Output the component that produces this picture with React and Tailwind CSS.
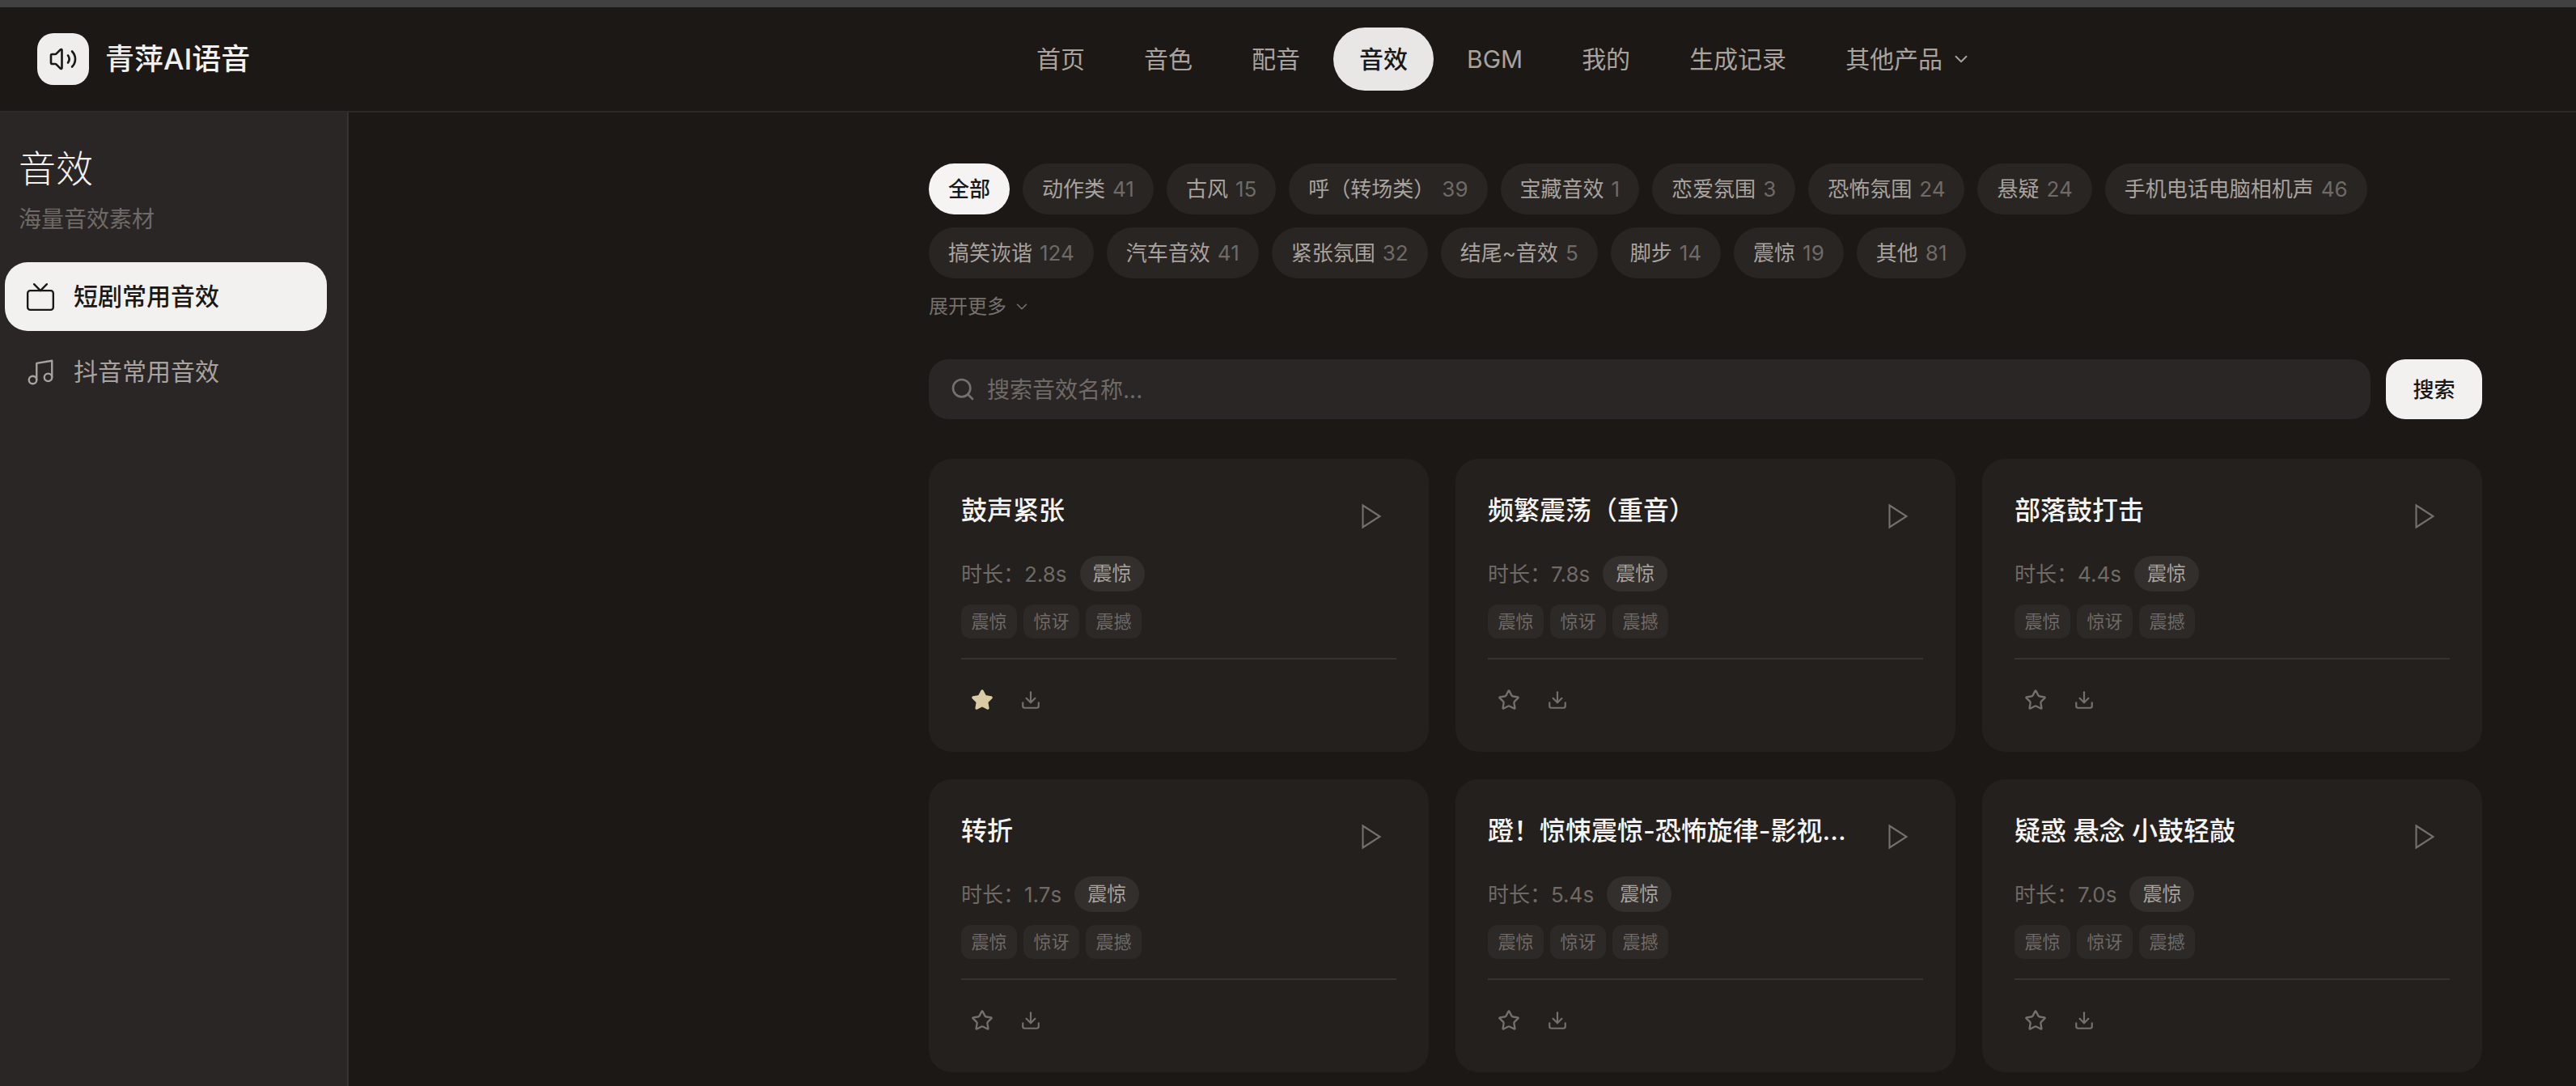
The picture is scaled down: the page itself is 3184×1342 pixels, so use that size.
import { ChevronDown, Download, Music, Search, Star, Tv, Volume2 } from 'lucide-react';

const navItems = ['首页', '音色', '配音', '音效', 'BGM', '我的', '生成记录'];

const filters = [
  ['全部', ''],
  ['动作类', 41],
  ['古风', 15],
  ['呼（转场类）', 39],
  ['宝藏音效', 1],
  ['恋爱氛围', 3],
  ['恐怖氛围', 24],
  ['悬疑', 24],
  ['手机电话电脑相机声', 46],
  ['搞笑诙谐', 124],
  ['汽车音效', 41],
  ['紧张氛围', 32],
  ['结尾~音效', 5],
  ['脚步', 14],
  ['震惊', 19],
  ['其他', 81],
];

const sounds = [
  { title: '鼓声紧张', duration: '2.8s', starred: true },
  { title: '频繁震荡（重音）', duration: '7.8s' },
  { title: '部落鼓打击', duration: '4.4s' },
  { title: '转折', duration: '1.7s' },
  { title: '蹬！惊悚震惊-恐怖旋律-影视...', duration: '5.4s' },
  { title: '疑惑 悬念 小鼓轻敲', duration: '7.0s' },
];

function SoundCard({ title, duration, starred }) {
  return (
    <div className="h-[362px] rounded-[28px] bg-[#24201d] p-10">
      <div className="flex items-start justify-between">
        <h3 className="mt-px h-[46px] text-[32px] leading-[46px] font-medium whitespace-nowrap text-[#f5f4f2]">{title}</h3>
        {/* sharp triangle, lucide's Play has rounded corners */}
        <svg
          width="36"
          height="36"
          viewBox="0 0 24 24"
          fill="none"
          stroke="currentColor"
          strokeWidth="1.4"
          className="mt-[13px] mr-[13px] shrink-0 text-[#75706b]"
        >
          <polygon points="5 3 19 12 5 21" />
        </svg>
      </div>
      <div className="mt-[31px] flex h-[44px] items-center gap-4">
        <span className="text-[26px] text-[#6f6a66]">时长：{duration}</span>
        <span className="rounded-full bg-[#332f2c] px-4 text-[24px] leading-[44px] text-[#a8a39e]">震惊</span>
      </div>
      <div className="mt-4 flex gap-2">
        {['震惊', '惊讶', '震撼'].map((tag) => (
          <span key={tag} className="h-[42px] w-[69px] rounded-xl bg-[#2d2926] text-center text-[22px] leading-[42px] text-[#6f6a66]">
            {tag}
          </span>
        ))}
      </div>
      <div className="mt-6 border-t-2 border-[#38332f]" />
      <div className="mt-[36px] ml-[12px] flex items-center gap-[33px]">
        <Star
          size={28}
          strokeWidth={2}
          className={starred ? 'fill-[#d9cba3] text-[#d9cba3]' : 'text-[#75706b]'}
        />
        <Download size={26} strokeWidth={2} className="text-[#75706b]" />
      </div>
    </div>
  );
}

export default function App() {
  return (
    <div className="h-[1342px] w-[3184px] overflow-hidden bg-[#1b1816] font-['Inter','Noto_Sans_CJK_SC',sans-serif]">
      <div className="h-[9px] bg-[#414141]" />

      <header className="flex h-[130px] items-center border-b-2 border-[#2c2927] bg-[#1b1816] pl-[46px]">
        <div className="flex w-[261px] shrink-0 items-center gap-[20px]">
          <div className="flex h-[64px] w-[64px] shrink-0 items-center justify-center rounded-[20px] bg-[#efeeec]">
            <Volume2 size={36} strokeWidth={1.75} className="text-[#1a1817]" />
          </div>
          <span className="text-[36px] font-medium whitespace-nowrap text-[#f2f1ef]">青萍AI语音</span>
        </div>
        <nav className="ml-[942px] flex items-center gap-[9px]">
          {navItems.map((item) => (
            <a
              key={item}
              className={`rounded-full px-8 text-[30px] leading-[78px] ${
                item === '音效' ? 'bg-[#e8e7e5] font-medium text-[#1a1817]' : 'text-[#a8a39e]'
              }`}
            >
              {item}
            </a>
          ))}
          <a className="flex items-center gap-[10px] px-8 text-[30px] leading-[78px] text-[#a8a39e]">
            其他产品
            <ChevronDown size={26} strokeWidth={1.75} />
          </a>
        </nav>
      </header>

      <div className="flex h-[1203px]">
        <aside className="w-[431px] shrink-0 border-r-2 border-[#35312f] bg-[#2a2625] pt-[39px]">
          <h2 className="pl-[23px] text-[46px] leading-[60px] font-light text-[#f2f1ef]">音效</h2>
          <p className="mt-[13px] pl-[23px] text-[28px] leading-[40px] text-[#6f6a66]">海量音效素材</p>
          <div className="mt-[33px] ml-[6px] flex w-[398px] flex-col gap-2">
            <div className="flex h-[85px] items-center gap-[22px] rounded-[28px] bg-[#f2f1ef] pl-[28px] text-[30px] font-medium text-[#1a1817]">
              <Tv size={38} strokeWidth={1.5} className="-ml-[3px]" />
              短剧常用音效
            </div>
            <div className="flex h-[85px] items-center gap-[22px] rounded-[28px] pl-[28px] text-[30px] text-[#a8a39e]">
              <Music size={38} strokeWidth={1.5} className="-ml-[3px]" />
              抖音常用音效
            </div>
          </div>
        </aside>

        <main className="ml-[717px] w-[1920px] pt-[63px]">
          <div className="flex flex-wrap gap-4">
            {filters.map(([name, count]) => (
              <button
                key={name}
                className={`flex h-[63px] items-center gap-[9px] rounded-full px-6 text-[26px] ${
                  name === '全部' ? 'bg-[#f5f4f2] font-medium text-[#1a1817]' : 'bg-[#282523] text-[#a8a39e]'
                }`}
              >
                {name}
                {count !== '' && <span className="text-[#6f6a66]">{count}</span>}
              </button>
            ))}
          </div>

          <div className="mt-[18px] flex h-[34px] items-center gap-2 text-[24px] text-[#75706b]">
            展开更多
            <ChevronDown size={22} strokeWidth={1.75} />
          </div>

          <div className="mt-[48px] flex gap-[19px]">
            <div className="flex h-[74px] flex-1 items-center gap-[14px] rounded-[24px] bg-[#292625] pl-[26px] text-[28px] text-[#6f6a66]">
              <Search size={32} strokeWidth={2} className="text-[#75706b]" />
              <span className="mt-px">搜索音效名称...</span>
            </div>
            <button className="h-[74px] w-[119px] rounded-[24px] bg-[#f2f1ef] text-[26px] font-medium text-[#1a1817]">搜索</button>
          </div>

          <div className="mt-[49px] grid grid-cols-3 gap-x-[33px] gap-y-[34px]">
            {sounds.map((sound) => (
              <SoundCard key={sound.title} {...sound} />
            ))}
          </div>
        </main>
      </div>
    </div>
  );
}
